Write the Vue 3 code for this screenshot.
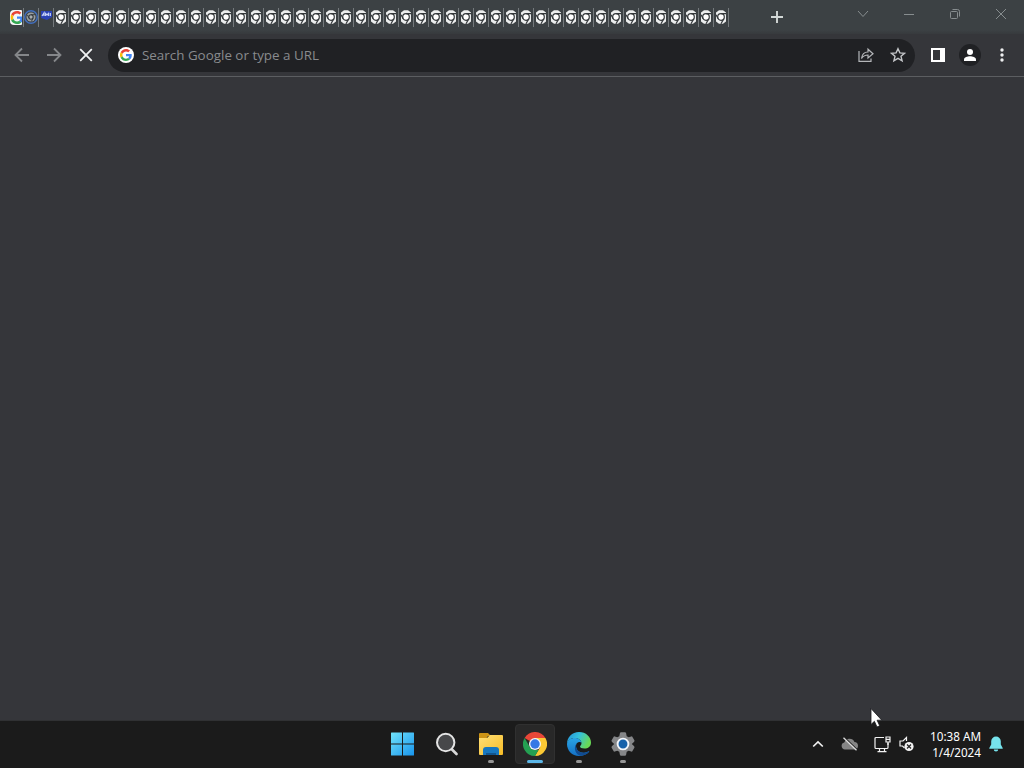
<script setup>
import { ref } from "vue";

const query = ref("");

// new-tab pages that are still loading
const loadingTabs = 45;
</script>

<template>
  <div class="desktop">
    <svg class="defs" width="0" height="0">
      <defs>
        <symbol id="google" viewBox="0 0 48 48">
          <path fill="#ea4335" d="M24 9.5c3.500 0 6.700 1.200 9.200 3.600l6.900-6.900C35.900 2.400 30.500 0 24 0 14.600 0 6.500 5.400 2.600 13.200l8 6.200C12.400 13.700 17.700 9.500 24 9.500z" />
          <path fill="#4285f4" d="M47 24.500c0-1.600-.2-3.100-.4-4.500H24v9h12.900c-.6 3-2.300 5.500-4.800 7.200l7.700 6C44.400 38 47 31.800 47 24.500z" />
          <path fill="#fbbc05" d="M10.500 28.600a14.500 14.500 0 0 1 0-9.200l-8-6.200a24 24 0 0 0 0 21.600l8-6.200z" />
          <path fill="#34a853" d="M24 48c6.500 0 11.900-2.100 15.900-5.800l-7.700-6c-2.200 1.500-4.900 2.300-8.200 2.300-6.300 0-11.600-4.200-13.500-9.900l-8 6.200C6.500 42.600 14.600 48 24 48z" />
        </symbol>
        <symbol id="chrome-mono" viewBox="0 0 10 14">
          <path d="M3 .3h4L10 2.500v9L7 13.700H3L0 11.500v-9z" fill="#eceeee" />
          <circle cx="5" cy="7" r="3.300" fill="#fff" stroke="#34383b" stroke-width="1.200" />
          <path d="M5 3.700h5M2.200 8.700L0 4.800M7.800 8.700L5 13.700" stroke="#34383b" stroke-width="1.200" />
        </symbol>
      </defs>
    </svg>

    <!-- Tab strip -->
    <header class="tab-strip">
      <div class="tabs">
        <div class="tab">
          <svg width="12" height="15" viewBox="0 0 12 15">
            <path d="M4 0h7a1 1 0 0 1 1 1v13a1 1 0 0 1-1 1H4a4 4 0 0 1-4-4V4a4 4 0 0 1 4-4z" fill="#f5f6f6" />
            <use href="#google" x="0.500" y="1" width="13" height="13" />
          </svg>
        </div>
        <div class="tab">
          <svg width="14" height="16" viewBox="0 0 14 16">
            <circle cx="7" cy="8" r="6.300" fill="none" stroke="#4270c0" stroke-width="1.400" />
            <circle cx="7" cy="8" r="4.500" fill="#9a9fa1" />
            <circle cx="7" cy="8" r="2.200" fill="#a9aeb0" stroke="#33383c" stroke-width="1.100" />
            <path d="M7 5.700h4M5 9L3.400 6M9 9.500l-1.700 3" stroke="#33383c" stroke-width=".9" />
          </svg>
        </div>
        <div class="tab">
          <svg class="blue-icon" width="11" height="9" viewBox="0 0 11 9">
            <path d="M0 0h11v6L6 9 0 7z" fill="#2b42b5" />
            <path d="M1 5l2-3v3M4.500 5V2.500L6 4l1.500-1.500V5M9.300 2v3" fill="none" stroke="#c5d0f6" stroke-width="1.200" />
          </svg>
        </div>
        <div v-for="n in loadingTabs" :key="n" class="tab">
          <svg width="10" height="14"><use href="#chrome-mono" /></svg>
        </div>
      </div>
      <button class="new-tab">
        <svg width="12" height="12" viewBox="0 0 12 12"><path d="M6 0v12M0 6h12" stroke="#d3d8d7" stroke-width="1.900" /></svg>
      </button>
      <div class="window-buttons">
        <button><svg width="12" height="12" viewBox="0 0 12 12"><path d="M1 3l5 5.500L11 3" /></svg></button>
        <button><svg width="12" height="12" viewBox="0 0 12 12"><path d="M1 6.500h10" /></svg></button>
        <button>
          <svg width="12" height="12" viewBox="0 0 12 12">
            <rect x="1.500" y="3.500" width="7" height="7" rx="1" />
            <path d="M3.500 1.500h5a2 2 0 0 1 2 2v5" />
          </svg>
        </button>
        <button><svg width="12" height="12" viewBox="0 0 12 12"><path d="M1 1l10 10M11 1L1 11" /></svg></button>
      </div>
    </header>

    <!-- Toolbar -->
    <nav class="toolbar">
      <button class="nav-button">
        <svg width="16" height="16" viewBox="0 0 16 16"><path d="M15 8H2M8 1.500L1.500 8 8 14.500" stroke="#85878a" /></svg>
      </button>
      <button class="nav-button">
        <svg width="16" height="16" viewBox="0 0 16 16"><path d="M1 8h13M8 1.500L14.500 8 8 14.500" stroke="#85878a" /></svg>
      </button>
      <button class="nav-button">
        <svg width="16" height="16" viewBox="0 0 16 16"><path d="M2.200 2.200l11.600 11.600M13.800 2.200L2.200 13.800" stroke="#f1f3f4" /></svg>
      </button>
      <div class="omnibox">
        <span class="search-logo"><svg width="12" height="12"><use href="#google" /></svg></span>
        <input v-model="query" placeholder="Search Google or type a URL" />
        <svg width="16" height="16" viewBox="0 0 16 16" fill="none" stroke="#b4b6b9" stroke-width="1.200">
          <path d="M1 4v10.400h12V11.500" />
          <path d="M3.500 11.500C4 7.500 6 5 10 5V2.200L15 6.700l-5 4.200V8C7 8 5 9.200 3.500 11.500z" />
        </svg>
        <svg width="16" height="16" viewBox="0 0 16 16" fill="none" stroke="#c4c6c9" stroke-width="1.400">
          <path d="M8 1.700l1.900 4.200 4.600.4-3.500 3 1.100 4.500L8 11.400l-4.100 2.400L5 9.300l-3.500-3 4.600-.4z" />
        </svg>
      </div>
      <button class="nav-button">
        <svg width="14" height="14" viewBox="0 0 14 14">
          <path d="M0 0h14v14H0zM2 2v10h7V2z" fill="#f8f9fa" fill-rule="evenodd" />
        </svg>
      </button>
      <button class="nav-button">
        <svg width="22" height="22" viewBox="0 0 22 22">
          <circle cx="11" cy="11" r="11" fill="#202124" />
          <circle cx="11" cy="8" r="3" fill="#fff" />
          <path d="M5 17v-1.500C5 13 8.500 12.200 11 12.200s6 .8 6 3.300V17z" fill="#fff" />
        </svg>
      </button>
      <button class="nav-button">
        <svg width="4" height="14" viewBox="0 0 4 14" fill="#eff0f1">
          <circle cx="2" cy="2" r="1.700" /><circle cx="2" cy="7" r="1.700" /><circle cx="2" cy="12" r="1.700" />
        </svg>
      </button>
    </nav>

    <main class="page"></main>

    <!-- Taskbar -->
    <footer class="taskbar">
      <div class="apps">
        <div class="app">
          <svg width="24" height="24" viewBox="0 0 24 24">
            <defs>
              <linearGradient id="win" x1="0" y1="0" x2="24" y2="24" gradientUnits="userSpaceOnUse">
                <stop offset="0" stop-color="#72e4fa" /><stop offset="1" stop-color="#1592ed" />
              </linearGradient>
            </defs>
            <path fill="url(#win)" d="M.5.5h10.500v11H0V1a.5.5 0 0 1 .5-.5zM12 .5h10.500a.5.5 0 0 1 .5.5v10.500H12zM0 12.500h11v11H.5a.5.5 0 0 1-.5-.5zM12 12.500h11V23a.5.5 0 0 1-.5.5H12z" />
          </svg>
        </div>
        <div class="app">
          <svg width="24" height="24" viewBox="0 0 24 24">
            <path d="M16.500 17l5 5" stroke="#d8d8d8" stroke-width="2.700" stroke-linecap="round" />
            <circle cx="10.700" cy="10.500" r="8.700" fill="#47484a" stroke="#e4e4e4" stroke-width="2" />
          </svg>
        </div>
        <div class="app open">
          <svg width="24" height="24" viewBox="0 0 24 24">
            <defs>
              <linearGradient id="folder" x1="0" y1="0" x2="1" y2="1">
                <stop offset="0" stop-color="#ffe078" /><stop offset="1" stop-color="#f7bc25" />
              </linearGradient>
            </defs>
            <path d="M1 1h8l3 3h-3L7 7H0V2a1 1 0 0 1 1-1z" fill="#cc9315" />
            <path d="M0 6h8l3-3h12a1 1 0 0 1 1 1v18a1 1 0 0 1-1 1H1a1 1 0 0 1-1-1z" fill="url(#folder)" />
            <path d="M4 23v-5a3 3 0 0 1 3-3h10a3 3 0 0 1 3 3v5z" fill="#1777bf" />
            <path d="M7 23v-2h10v2z" fill="#12558e" />
          </svg>
        </div>
        <div class="app open active">
          <svg width="24" height="24" viewBox="0 0 24 24">
            <path d="M12 12L1.600 6a12 12 0 0 1 20.800 0z" fill="#e84738" />
            <path d="M12 6h10.400A12 12 0 0 1 12 24l5.200-9z" fill="#fcc934" />
            <path d="M1.600 6l5.200 9A6 6 0 0 0 12 18h3.500L12 24A12 12 0 0 1 1.600 6z" fill="#24a052" />
            <circle cx="12" cy="12" r="6" fill="#f3f6fc" />
            <circle cx="12" cy="12" r="4.700" fill="#3578e5" />
          </svg>
        </div>
        <div class="app open">
          <svg width="24" height="24" viewBox="0 0 24 24">
            <defs>
              <linearGradient id="edge-top" x1="0" y1="0" x2="1" y2=".4">
                <stop offset="0" stop-color="#238fd8" /><stop offset=".5" stop-color="#34c1dd" /><stop offset="1" stop-color="#68d956" />
              </linearGradient>
              <linearGradient id="edge-left" x1="0" y1="0" x2="0" y2="1">
                <stop offset="0" stop-color="#2aa5e6" /><stop offset="1" stop-color="#1470c4" />
              </linearGradient>
            </defs>
            <path d="M0 12C0 5 5 0 12 0s12 5 12 10.500c0 4-3 6-6.500 6-3 0-4.500-1-4.500-2 0-.8 1.500-1.200 1.500-3.500C14.500 8 11 6 7.500 6 3.500 6 .8 8.500 0 12z" fill="url(#edge-top)" />
            <path d="M0 12c.5-4 4-6 7.500-6 3.700 0 7 2 7 5-1-1.500-5.500-1.500-5.500 3 0 4 4 7.500 9 6.500 1.500-.3 3-1 3.700-1.300.4-.2.7.2.4.6C20 22.500 16 24 12 24 5 24 0 18.500 0 12z" fill="url(#edge-left)" />
            <path d="M9.500 11.500C6 16 8.500 23 14 23.800c3.500-.3 6.500-1.800 8.100-4 .3-.4 0-.8-.4-.6-6.500 3.600-12.700.3-12.700-5.200 0-1 .2-1.800.5-2.500z" fill="#114b91" />
          </svg>
        </div>
        <div class="app open">
          <svg width="24" height="24" viewBox="0 0 24 24">
            <path d="M9 .8L10 .3h4l1 .5.7 3.400 2 1.100 3.300-1 2.500 4.200-.3 1.200L20.800 12l2.400 2.300.3 1.200-2.500 4.200-3.300-1-2 1.100-.7 3.400-1 .5h-4l-1-.5-.7-3.400-2-1.100-3.300 1-2.500-4.200.3-1.200L3.200 12 .8 9.700.5 8.500 3 4.300l3.300 1 2-1.100z" fill="#858688" />
            <circle cx="12" cy="12" r="5.400" fill="#1762aa" stroke="#f2f5f9" stroke-width="1.900" />
          </svg>
        </div>
      </div>

      <div class="tray">
        <svg class="chevron" width="12" height="8" viewBox="0 0 12 8"><path d="M1.200 6.500L6 2l4.800 4.500" fill="none" stroke="#f0f0f0" stroke-width="1.700" /></svg>
        <svg class="cloud" width="18" height="14" viewBox="0 0 18 14">
          <path d="M4 12.500a3.500 3.500 0 0 1-.7-6.900A5.500 5.500 0 0 1 13.500 5 3.800 3.800 0 0 1 14 12.500z" fill="#858585" />
          <path d="M3.200.2l13 12.500" stroke="#1c1c1c" stroke-width="1.200" />
          <path d="M2.500.8l13 12.500" stroke="#ddd" stroke-width="1.300" />
        </svg>
        <svg class="network" width="17" height="17" viewBox="0 0 17 17" fill="none" stroke="#f2f2f2" stroke-width="1.200">
          <path d="M10 1.500H2a1 1 0 0 0-1 1v9a1 1 0 0 0 1 1h11a1 1 0 0 0 1-1V7M5.500 12.500v3M10.500 12.500v3M3.500 15.700h9" />
          <path d="M12 1h4v5h-4zM14 6v3M12 3.300h4" />
        </svg>
        <svg class="volume" width="16" height="16" viewBox="0 0 16 16">
          <path d="M7.500 5V1.500L4 5H1v5h2.500l2 2" fill="none" stroke="#f2f2f2" stroke-width="1.200" />
          <circle cx="10" cy="10.500" r="4.600" fill="#f4f4f4" />
          <path d="M8 8.500l4 4M12 8.500l-4 4" stroke="#222" stroke-width="1.200" />
        </svg>
        <div class="clock">
          <span class="time">10:38 AM</span>
          <span class="date">1/4/2024</span>
        </div>
        <svg class="bell" width="14" height="16" viewBox="0 0 14 16" fill="#76e3ec">
          <path d="M7 .5A4.800 4.800 0 0 0 2.200 5.300V8.500L.3 12v.8h13.400V12l-1.900-3.500V5.300A4.800 4.800 0 0 0 7 .5zM4.800 13.500a2.200 2 0 0 0 4.400 0z" />
        </svg>
      </div>
    </footer>

    <svg class="cursor" width="13" height="20" viewBox="0 0 13 20">
      <path d="M1 .5v16l3.400-3.200L7 19l2.700-1.200-2.600-5.600h4.700z" fill="#fff" stroke="#17181a" stroke-width=".8" />
    </svg>
  </div>
</template>

<style>
body {
  margin: 0;
  overflow: hidden;
}
</style>

<style scoped>
.desktop {
  position: relative;
  display: flex;
  flex-direction: column;
  width: 1024px;
  height: 768px;
  overflow: hidden;
  background: #35363a;
  font-family: "Noto Sans", "Open Sans", sans-serif;
}

.defs {
  position: absolute;
}

svg {
  display: block;
  flex-shrink: 0;
}

button {
  display: flex;
  align-items: center;
  justify-content: center;
  padding: 0;
  border: none;
  background: none;
}

/* Tab strip */
.tab-strip {
  display: flex;
  height: 34px;
  background: linear-gradient(#3c4144 0 30px, #373a3d);
}

.tabs {
  display: flex;
  align-items: center;
  height: 34px;
  padding-left: 9px;
}

.tab {
  display: flex;
  align-items: center;
  justify-content: center;
  box-sizing: border-box;
  width: 15px;
  height: 19px;
  border-right: 1px solid #74797c;
}

.blue-icon {
  margin-bottom: 3px;
}

.new-tab {
  width: 28px;
  margin-left: 34px;
}

.window-buttons {
  display: flex;
  height: 28px;
  margin-left: auto;
}

.window-buttons button {
  width: 46px;
}

.window-buttons svg {
  fill: none;
  stroke: #878d8f;
}

/* Toolbar */
.toolbar {
  display: flex;
  align-items: center;
  box-sizing: border-box;
  height: 43px;
  padding: 0 6px;
  border-bottom: 1px solid #5c5e61;
}

.nav-button {
  width: 32px;
  height: 32px;
}

.nav-button path {
  fill: none;
  stroke-width: 1.8;
}

.nav-button path[fill] {
  fill: #fff;
}

.omnibox {
  display: flex;
  align-items: center;
  gap: 16px;
  flex: 1;
  box-sizing: border-box;
  height: 33px;
  margin: 0 7px 0 6px;
  padding: 0 9px 0 10px;
  border-radius: 17px;
  background: #202124;
}

.search-logo {
  display: flex;
  align-items: center;
  justify-content: center;
  width: 16px;
  height: 16px;
  border-radius: 50%;
  background: #fff;
}

.omnibox input {
  flex: 1;
  margin-left: -8px;
  padding: 0;
  border: none;
  outline: none;
  background: none;
  color: #e8eaed;
  font: 13.4px "Open Sans", "Noto Sans", sans-serif;
}

.omnibox input::placeholder {
  color: #898b8e;
}

.page {
  flex: 1;
}

/* Taskbar */
.taskbar {
  display: grid;
  grid-template-columns: 380px 1fr auto;
  box-sizing: border-box;
  height: 48px;
  padding-bottom: 1px;
  border-top: 1px solid #303133;
  background: #1b1b1b;
}

.apps {
  grid-column: 2;
  display: flex;
  align-items: center;
  gap: 4px;
  padding-left: 3px;
}

.app {
  position: relative;
  display: flex;
  align-items: center;
  justify-content: center;
  box-sizing: border-box;
  width: 40px;
  height: 40px;
  border: 1px solid transparent;
  border-radius: 4px;
}

.app.active {
  border-color: #303030;
  background: #282828;
}

.app.open::after {
  content: "";
  position: absolute;
  bottom: 0;
  left: 50%;
  width: 6px;
  height: 3px;
  border-radius: 2px;
  background: #969696;
  transform: translateX(-50%);
}

.app.active::after {
  width: 16px;
  background: #5cb7e8;
}

.tray {
  display: flex;
  align-items: center;
  padding-right: 21px;
  color: #fff;
}

.cloud {
  margin-left: 17px;
}

.network {
  margin-left: 15px;
}

.volume {
  margin-left: 8px;
}

.clock {
  display: flex;
  flex-direction: column;
  width: 66px;
  font-size: 11.7px;
  line-height: 16px;
  text-align: right;
  white-space: nowrap;
}

.bell {
  margin-left: 8px;
}

.cursor {
  position: absolute;
  left: 870px;
  top: 708px;
}
</style>
